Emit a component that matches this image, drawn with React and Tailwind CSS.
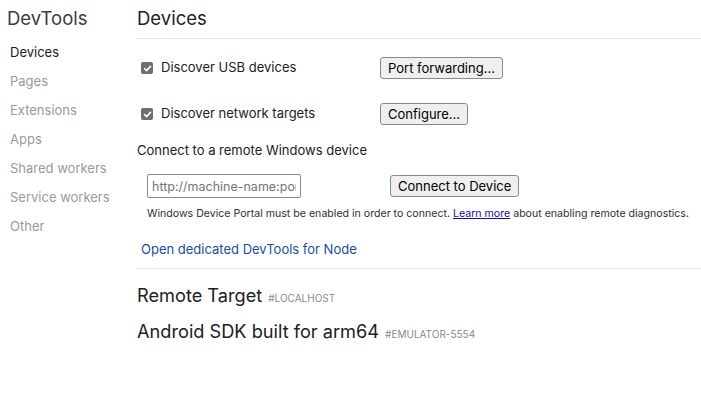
import React from "react";

const navItems = [
  "Devices",
  "Pages",
  "Extensions",
  "Apps",
  "Shared workers",
  "Service workers",
  "Other",
];

function Check() {
  return (
    <span className="flex h-[12px] w-[12px] items-center justify-center rounded-[2px] bg-[#6e6e6e]">
      <svg width="9" height="9" viewBox="0 0 10 10">
        <path
          d="M1.8 5.2 L4 7.4 L8.3 2.6"
          fill="none"
          stroke="white"
          strokeWidth="1.8"
          strokeLinecap="round"
          strokeLinejoin="round"
        />
      </svg>
    </span>
  );
}

function Button({ children, className = "" }) {
  return (
    <button
      type="button"
      className={
        "h-[22px] rounded-[3px] border border-[#8a8a8a] bg-[#efefef] px-[7px] text-[13px] leading-none text-black " +
        className
      }
    >
      {children}
    </button>
  );
}

export default function App() {
  return (
    <div
      className="flex h-[402px] w-[701px] bg-white text-[#202124]"
      style={{ fontFamily: 'Inter, "Liberation Sans", Arial, sans-serif' }}
    >
      {/* sidebar */}
      <aside className="w-[137px] shrink-0">
        <h1 className="pl-[7px] pt-[6px] text-[18.5px] leading-[24px] text-[#3c3c3c]">
          DevTools
        </h1>
        <nav className="mt-[14px] flex flex-col gap-[13px] pl-[10px]">
          {navItems.map((n, i) => (
            <span
              key={n}
              className={
                "text-[13px] leading-[16px] " +
                (i === 0 ? "text-[#202124]" : "text-[#9a9a9a]")
              }
            >
              {n}
            </span>
          ))}
        </nav>
      </aside>

      {/* main */}
      <main className="flex-1">
        <h2 className="pt-[7px] text-[18.5px] leading-[22px] text-[#202124]">
          Devices
        </h2>
        <div className="mt-[9px] h-px bg-[#e6e6e6]" />

        <div className="mt-[18px] flex items-center">
          <div className="flex w-[243px] items-center gap-[8px] pl-[4px]">
            <Check />
            <span className="text-[13px]">Discover USB devices</span>
          </div>
          <Button>Port forwarding...</Button>
        </div>

        <div className="mt-[24px] flex items-center">
          <div className="flex w-[243px] items-center gap-[8px] pl-[4px]">
            <Check />
            <span className="text-[13px]">Discover network targets</span>
          </div>
          <Button>Configure...</Button>
        </div>

        <p className="mt-[17px] text-[13px] leading-[16px]">
          Connect to a remote Windows device
        </p>

        <div className="mt-[16px] flex items-center pl-[10px]">
          <input
            className="h-[24px] w-[154px] rounded-[2px] border border-[#8a8a8a] px-[4px] text-[12.5px] text-[#555] outline-none placeholder:text-[#757575]"
            placeholder="http://machine-name:port"
          />
          <Button className="ml-[89px]">Connect to Device</Button>
        </div>

        <p className="mt-[9px] pl-[10px] text-[10.6px] leading-[14px] text-[#303030]">
          Windows Device Portal must be enabled in order to connect.{" "}
          <a className="text-[#1a0dab] underline">Learn more</a> about enabling
          remote diagnostics.
        </p>

        <a className="mt-[20px] block pl-[4px] text-[13px] leading-[16px] text-[#1a4da8]">
          Open dedicated DevTools for Node
        </a>

        <div className="mt-[11px] h-px bg-[#e6e6e6]" />

        <div className="mt-[15px] flex items-baseline gap-[6px]">
          <span className="text-[18.2px] leading-[22px]">Remote Target</span>
          <span className="text-[10px] text-[#8a8a8a]">#LOCALHOST</span>
        </div>

        <div className="mt-[14px] flex items-baseline gap-[6px]">
          <span className="text-[18.2px] leading-[22px]">
            Android SDK built for arm64
          </span>
          <span className="text-[10px] text-[#8a8a8a]">#EMULATOR-5554</span>
        </div>
      </main>
    </div>
  );
}
